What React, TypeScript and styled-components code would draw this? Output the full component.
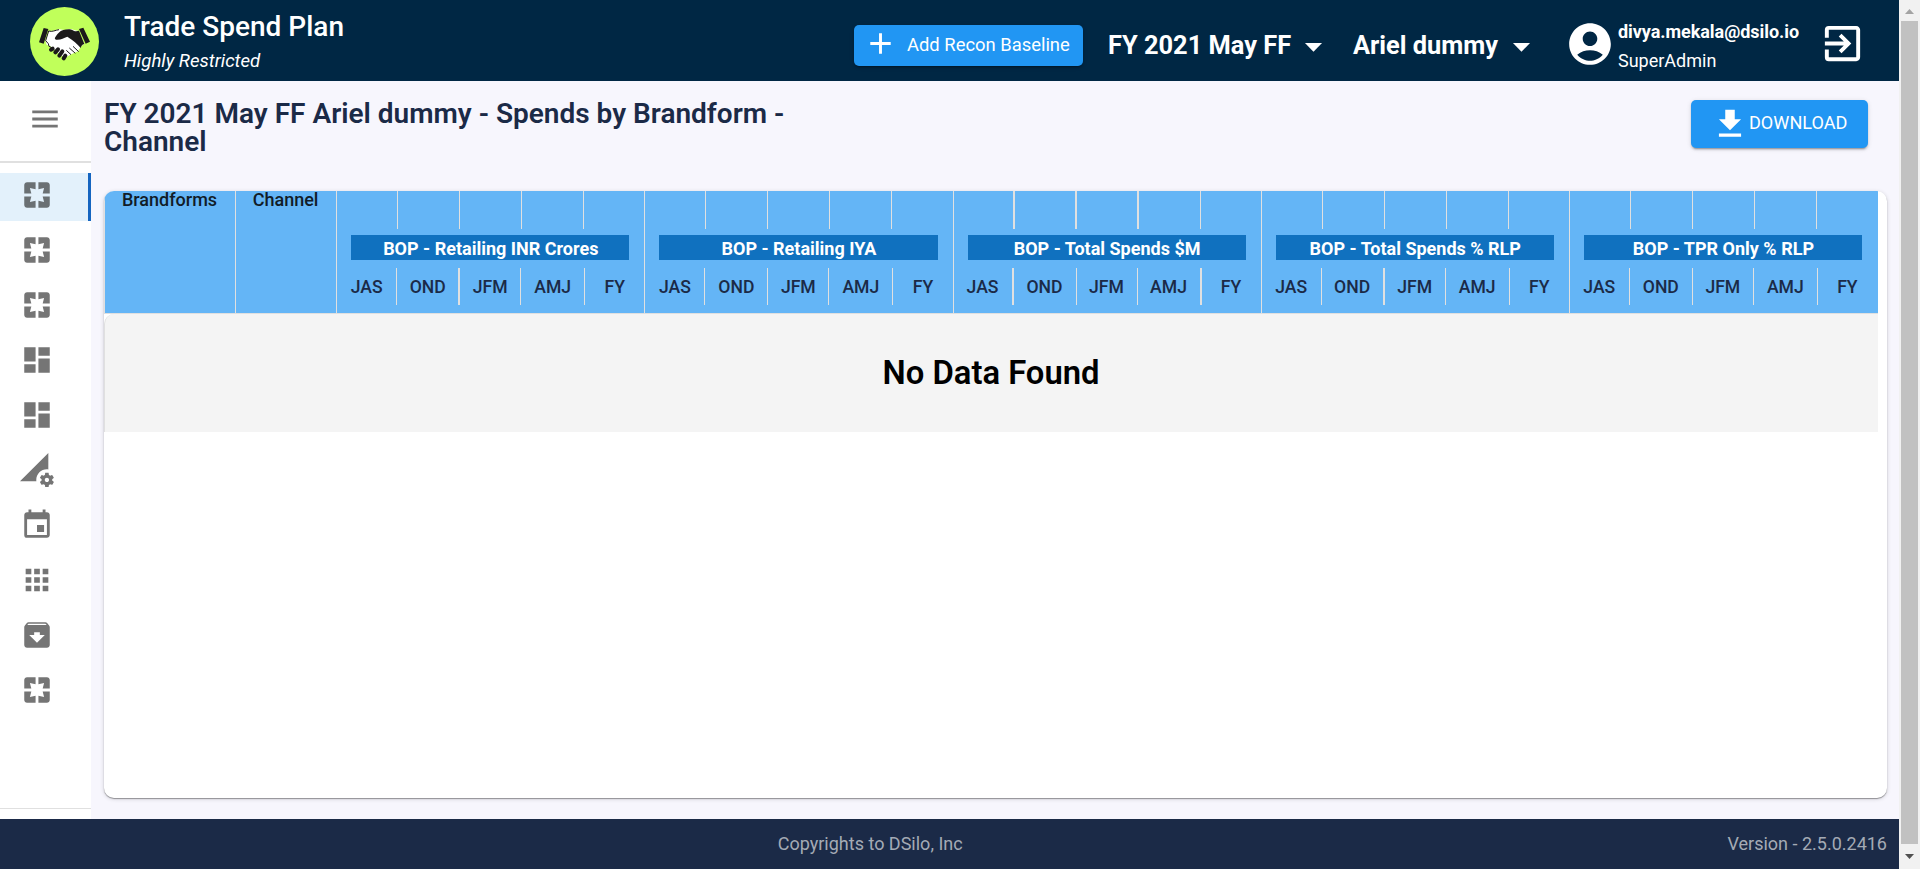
import React from "react";
import styled, { createGlobalStyle } from "styled-components";
import {
  MdPages, MdDashboard, MdPermDataSetting, MdEvent, MdApps, MdArchive, MdMenu,
  MdGetApp, MdAdd, MdArrowDropDown, MdAccountCircle, MdExitToApp,
} from "react-icons/md";

const GlobalStyle = createGlobalStyle`
  * { box-sizing: border-box; }
  body { margin: 0; font-family: Roboto, "Liberation Sans", sans-serif; overflow: hidden; }
  svg { display: block; flex: none; }
`;

const Screen = styled.div`display: flex; height: 869px; width: 100%;`;
const Page = styled.div`flex: 1; min-width: 0; display: flex; flex-direction: column; background: #f7f6fd;`;

const Header = styled.header`
  height: 81px; flex: none; display: flex; align-items: flex-start; background: #002744; color: #fff;
`;
const Logo = styled.svg`width: 69px; height: 69px; margin: 7px 0 0 30px;`;
const Brand = styled.div`margin: 10px auto 0 25px;`;
const BrandName = styled.div`font-size: 28px; font-weight: 500; line-height: 33px;`;
const BrandNote = styled.div`
  font-size: 18.6px; font-style: italic; line-height: 22px; margin-top: 7px;
`;
const Button = styled.button<{ $w: number; $h: number; $pad: number; $gap: number; $size?: number }>`
  width: ${p => p.$w}px; height: ${p => p.$h}px; padding: 0 0 0 ${p => p.$pad}px; gap: ${p => p.$gap}px;
  display: flex; align-items: center; border: 0; border-radius: 5px; background: #2196f3; color: #fff;
  font: 400 ${p => p.$size ?? 18.1}px Roboto, sans-serif; white-space: nowrap;
  box-shadow: 0 3px 1px -2px rgba(0,0,0,.2), 0 2px 2px rgba(0,0,0,.14), 0 1px 5px rgba(0,0,0,.12);
  span { padding-bottom: 3px; }
`;
const AddSlot = styled.div`margin: 25px 25px 0 0; svg { margin-top: -4px; }`;
const Picker = styled.div<{ $w: number; $before?: number }>`
  width: ${p => p.$w}px; margin: 24px 0 0 ${p => p.$before ?? 0}px;
  display: flex; align-items: center; justify-content: space-between;
  font-size: 25.4px; font-weight: 700; height: 41px; white-space: nowrap;
  svg { margin: 3px -12px 0 0; }
`;
const Avatar = styled.div`margin: 19px 0 0 35px;`;
const Account = styled.div`margin: 20px 0 0 3px; width: 201px; font-size: 18px; line-height: 24px;`;
const Email = styled.div`font-weight: 700; letter-spacing: -0.05px;`;
const Role = styled.div`margin-top: 5px;`;
const Exit = styled.div`margin: 20px 33px 0 0;`;

const Body = styled.div`flex: 1; display: flex; min-height: 0;`;
const Sidebar = styled.nav`
  width: 91px; flex: none; background: #fff; color: #757575; display: flex; flex-direction: column;
`;
const MenuToggle = styled.div`height: 82px; flex: none; padding: 21px 0 0 28px; border-bottom: 2px solid #e0e0e0;`;
const NavList = styled.div`flex: 1; padding-top: 10px; display: flex; flex-direction: column; gap: 7px;`;
const NavItem = styled.div<{ $active?: boolean }>`
  height: 48px; padding: 5px 0 0 20px;
  background: ${p => (p.$active ? "#e3f1fb" : "none")};
  border-right: 3px solid ${p => (p.$active ? "#1565c0" : "transparent")};
  color: ${p => (p.$active ? "#6a7073" : "inherit")};
`;
const SidebarEnd = styled.div`height: 11px; border-top: 1px solid #e0e0e0;`;

const Content = styled.main`flex: 1; min-width: 0; padding: 19px 12px 21px 13px; display: flex; flex-direction: column;`;
const TitleBar = styled.div`height: 91px; flex: none; display: flex; justify-content: space-between; padding-right: 19px;`;
const Title = styled.h1`margin: 0; width: 720px; font-size: 28px; line-height: 28px; font-weight: 600; color: #1b2a47;`;
const Card = styled.section`
  flex: 1; background: #fff; border-radius: 10px; overflow: hidden; padding-right: 9px;
  box-shadow: 0 1px 1px rgba(0,0,0,.35), 0 1px 4px rgba(0,0,0,.16);
`;
const TableHead = styled.div`
  height: 123px; display: flex; background: #64b5f6; border-left: 1px solid #e0e0e0; border-bottom: 1px solid #e0e0e0;
`;
const KeyColumn = styled.div<{ $w: number }>`
  width: ${p => p.$w}px; flex: none; border-right: 1px solid #e0e0e0; text-align: center; padding-right: 1px;
  font-size: 18px; line-height: 17px; font-weight: 500; color: #111c28;
`;
const Group = styled.div`
  flex: 1 1 0; min-width: 0; border-right: 1px solid #e0e0e0;
  &:last-child { border-right-color: transparent; }
`;
const Divided = styled.span<{ $line: number }>`border-right: ${p => p.$line}px solid #e0e0e0;`;
const Ticks = styled.div`
  height: 38px; display: grid; grid-template-columns: 61px 62px 62px 62px 1fr;
`;
const GroupTitle = styled.div`
  height: 25px; margin: 6px 15px 0 14px; padding: 2px 0 0 1px; background: #1071bf; color: #fff; text-align: center;
  font-size: 18px; line-height: 24px; font-weight: 700; white-space: nowrap;
`;
const Quarters = styled.div`
  height: 37px; margin-top: 8px; display: grid; grid-template: 37px / 60px 63px 61px 64px 1fr;
  font-size: 17.6px; font-weight: 500; line-height: 39px; color: #1b2a47; text-align: center;
`;
const Empty = styled.div`
  height: 118px; display: flex; align-items: center; justify-content: center; background: #f4f4f4; color: #000;
  border-left: 1px solid #e0e0e0; border-top-left-radius: 10px; padding-right: 1px;
  font-size: 32.8px; font-weight: 600;
`;

const Footer = styled.footer`
  height: 50px; flex: none; background: #1b2a47; color: #a4aab5; font-size: 18px; line-height: 50px;
  display: grid; grid-template-columns: 1fr auto; text-align: center; white-space: nowrap;
`;
const Copyright = styled.span`padding-left: 13px;`;
const Version = styled.span`padding-right: 12px;`;

const Scrollbar = styled.div`
  width: 21px; flex: none; background: #f1f1f1; display: flex; flex-direction: column; align-items: center;
`;
const Thumb = styled.div`width: 17px; height: 823px; background: #c1c1c1;`;
const ArrowBox = styled.svg`width: 21px; height: 21px;`;

const NAV = [MdPages, MdPages, MdPages, MdDashboard, MdDashboard, MdPermDataSetting, MdEvent, MdApps, MdArchive, MdPages];
const QUARTERS = ["JAS", "OND", "JFM", "AMJ", "FY"];

// Divider widths after each quarter, for the upper ticks and the quarter labels.
const THIN = [1, 1, 1, 1, 0];
const GROUPS = [
  { name: "Retailing INR Crores", ticks: THIN, dividers: [1, 2, 1, 1, 0] },
  { name: "Retailing IYA", ticks: THIN, dividers: THIN },
  { name: "Total Spends $M", ticks: [2, 2, 2, 1, 0], dividers: [2, 1, 1, 2, 0] },
  { name: "Total Spends % RLP", ticks: THIN, dividers: [1, 2, 1, 1, 0] },
  { name: "TPR Only % RLP", ticks: THIN, dividers: THIN },
];

function HandshakeLogo() {
  return (
    <Logo viewBox="0 0 207 207">
      <circle cx="103.5" cy="103.5" r="103.5" fill="#c0ff5a" />
      <path d="M41 63l14 3-14 44-14-4zM147 66l13-4 20 42-13 6z" fill="#1c1a1b" />
      <path d="M57 72c14 2 22-5 31-5 8 0 14 3 18 3 9-5 17-4 24-2l15 4 18 39-9 6-10 16-20 9-15 8-14-3-30-27-15-7-4-12z" fill="#fff" />
      <path d="M75 92c6-9 14-21 25-23 12-3 20-4 31 2 7 3 12 1 16 0l16 40c-7 2-9 6-11 12-9-12-23-23-40-34-11 4-17 9-30 9-5 0-9-2-7-6z" fill="#1c1a1b" />
      <path d="M56 72c10 4 21-3 31-4M56 72l-9 29 8 9 2 8 12 6M129 118l17 16M118 123l18 16M109 130l14 13" fill="none" stroke="#1c1a1b" strokeWidth="3" />
      <path d="M63 128l5-3M76 136l8-9M88 146l9-13M101 154l5-8" stroke="#1c1a1b" strokeWidth="12" strokeLinecap="round" />
    </Logo>
  );
}

export default function App() {
  return (
    <Screen>
      <GlobalStyle />
      <Page>
        <Header>
          <HandshakeLogo />
          <Brand>
            <BrandName>Trade Spend Plan</BrandName>
            <BrandNote>Highly Restricted</BrandNote>
          </Brand>
          <AddSlot>
            <Button $w={229} $h={41} $pad={9} $gap={9} $size={18.4}><MdAdd size={35} /><span>Add Recon Baseline</span></Button>
          </AddSlot>
          <Picker $w={214}>FY 2021 May FF<MdArrowDropDown size={41} /></Picker>
          <Picker $w={177} $before={31}>Ariel dummy<MdArrowDropDown size={41} /></Picker>
          <Avatar><MdAccountCircle size={50} /></Avatar>
          <Account>
            <Email>divya.mekala@dsilo.io</Email>
            <Role>SuperAdmin</Role>
          </Account>
          <Exit><MdExitToApp size={47} /></Exit>
        </Header>
        <Body>
          <Sidebar>
            <MenuToggle><MdMenu size={34} /></MenuToggle>
            <NavList>
              {NAV.map((Icon, i) => <NavItem key={i} $active={i === 0}><Icon size={34} /></NavItem>)}
            </NavList>
            <SidebarEnd />
          </Sidebar>
          <Content>
            <TitleBar>
              <Title>FY 2021 May FF Ariel dummy - Spends by Brandform - Channel</Title>
              <Button $w={177} $h={48} $pad={20} $gap={0}><MdGetApp size={38} /><span>DOWNLOAD</span></Button>
            </TitleBar>
            <Card>
              <TableHead>
                <KeyColumn $w={131}>Brandforms</KeyColumn>
                <KeyColumn $w={101.2}>Channel</KeyColumn>
                {GROUPS.map(g => (
                  <Group key={g.name}>
                    <Ticks>{QUARTERS.map((q, i) => <Divided key={q} $line={g.ticks[i]} />)}</Ticks>
                    <GroupTitle>BOP - {g.name}</GroupTitle>
                    <Quarters>{QUARTERS.map((q, i) => <Divided key={q} $line={g.dividers[i]}>{q}</Divided>)}</Quarters>
                  </Group>
                ))}
              </TableHead>
              <Empty>No Data Found</Empty>
            </Card>
          </Content>
        </Body>
        <Footer>
          <Copyright>Copyrights to DSilo, Inc</Copyright>
          <Version>Version - 2.5.0.2416</Version>
        </Footer>
      </Page>
      <Scrollbar>
        <ArrowBox viewBox="0 0 21 21"><path d="M6 14l4.5-5 4.5 5z" fill="#a3a3a3" /></ArrowBox>
        <Thumb />
        <ArrowBox viewBox="0 0 21 21"><path d="M6 10l4.5 5 4.5-5z" fill="#505050" /></ArrowBox>
      </Scrollbar>
    </Screen>
  );
}
